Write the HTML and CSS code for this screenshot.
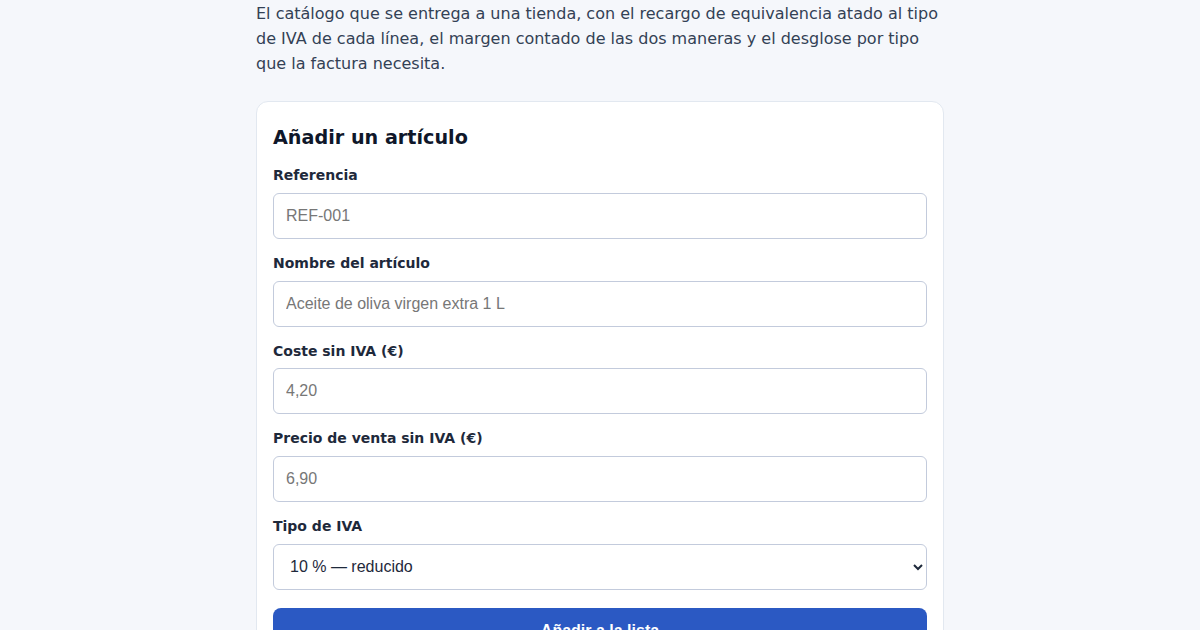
FILE: index.html
```html
<!DOCTYPE html>
<html lang="es">
<head>
<meta charset="utf-8">
<title>Catálogo</title>
<link rel="stylesheet" href="styles.css">
</head>
<body>
<main class="page">
  <p class="intro">El catálogo que se entrega a una tienda, con el recargo de equivalencia atado al tipo de IVA de cada línea, el margen contado de las dos maneras y el desglose por tipo que la factura necesita.</p>
  <section class="card">
    <h2 class="card-title">Añadir un artículo</h2>
    <form class="form">
      <div class="field">
        <label class="label" for="ref">Referencia</label>
        <input class="input" id="ref" type="text" placeholder="REF-001">
      </div>
      <div class="field">
        <label class="label" for="nombre">Nombre del artículo</label>
        <input class="input" id="nombre" type="text" placeholder="Aceite de oliva virgen extra 1 L">
      </div>
      <div class="field">
        <label class="label" for="coste">Coste sin IVA (€)</label>
        <input class="input" id="coste" type="text" placeholder="4,20">
      </div>
      <div class="field">
        <label class="label" for="precio">Precio de venta sin IVA (€)</label>
        <input class="input" id="precio" type="text" placeholder="6,90">
      </div>
      <div class="field">
        <label class="label" for="tipo">Tipo de IVA</label>
        <select class="input select" id="tipo">
          <option>21 % — general</option>
          <option selected>10 % — reducido</option>
          <option>4 % — superreducido</option>
        </select>
      </div>
      <button class="button" type="button">Añadir a la lista</button>
    </form>
  </section>
</main>
</body>
</html>
```

FILE: styles.css
```css
html, body {
  margin: 0;
  padding: 0;
}
body {
  background: #f5f7fb;
  font-family: "DejaVu Sans", sans-serif;
  color: #1e293b;
}
.page {
  width: 688px;
  margin: 0 auto;
  padding-top: 1px;
}
.intro {
  margin: 0 0 25px;
  font-size: 16px;
  line-height: 25px;
  color: #334155;
}
.card {
  background: #ffffff;
  border: 1px solid #e2e8f0;
  border-radius: 12px;
  padding: 22px 16px 16px;
}
.card-title {
  margin: 0 0 13px;
  font-size: 19.2px;
  line-height: 28px;
  font-weight: bold;
  color: #0f172a;
}
.form {
  display: flex;
  flex-direction: column;
  gap: 14px;
}
.field {
  display: flex;
  flex-direction: column;
}
.label {
  font-size: 14px;
  line-height: 20px;
  font-weight: bold;
  color: #1e293b;
  margin-bottom: 7.75px;
}
.input {
  box-sizing: border-box;
  height: 46px;
  width: 100%;
  padding: 0 12px;
  border: 1px solid #c3cbdc;
  border-radius: 6px;
  background: #ffffff;
  font-family: "Liberation Sans", Arial, sans-serif;
  font-size: 16px;
  color: #1e293b;
}
.input::placeholder {
  color: #777777;
}
.select {
  padding: 0 8px 0 12px;
}
.button {
  margin-top: 4px;
  height: 46px;
  border: none;
  border-radius: 8px;
  background: #2b59c3;
  color: #ffffff;
  font-family: "Liberation Sans", Arial, sans-serif;
  font-size: 16px;
  font-weight: bold;
}
```
